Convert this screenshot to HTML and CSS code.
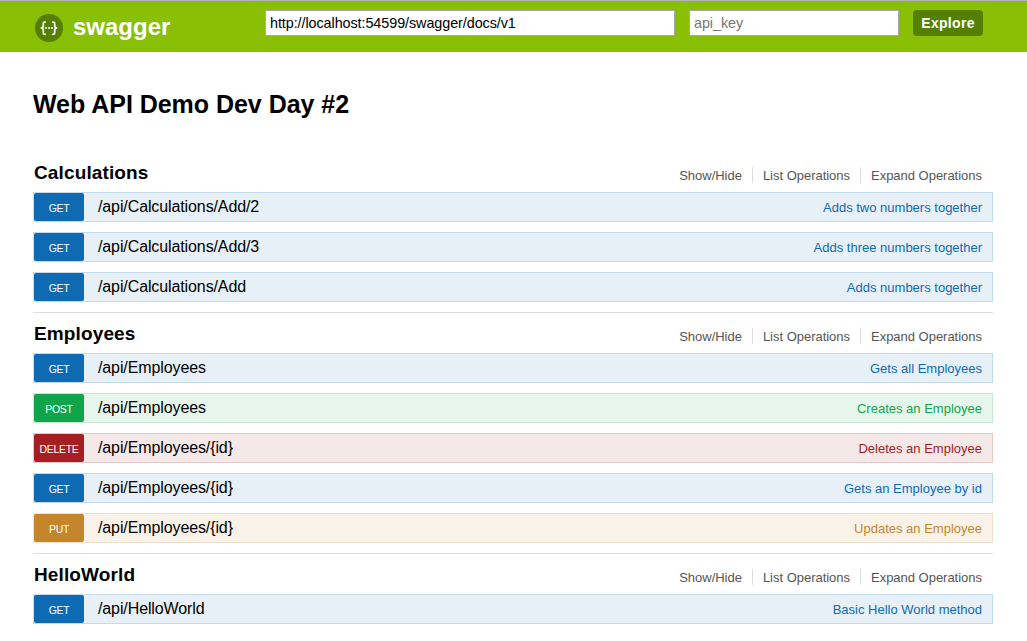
FILE: index.html
```html
<!DOCTYPE html>
<html lang="en">
<head>
<meta charset="utf-8">
<title>Swagger UI</title>
<link rel="stylesheet" href="styles.css">
</head>
<body>
<header class="header">
  <div class="brand">
    <svg class="logo" width="28" height="28" viewBox="0 0 28 28">
      <circle cx="14" cy="14" r="14" fill="#547f00"/>
      <g fill="none" stroke="#fff" stroke-width="1.7">
        <path d="M10.800 8.200H10Q8.300 8.200 8.300 9.800V12Q8.300 14 5.700 14Q8.300 14 8.300 16V18.800Q8.300 20.400 10 20.400H10.800"/>
        <path d="M17.200 8.200H18Q19.700 8.200 19.700 9.800V12Q19.700 14 22.300 14Q19.700 14 19.700 16V18.800Q19.700 20.400 18 20.400H17.200"/>
      </g>
      <g fill="#fff"><circle cx="11" cy="14" r="1"/><circle cx="14" cy="14" r="1"/><circle cx="17" cy="14" r="1"/></g>
    </svg>
    <span class="brand-name">swagger</span>
  </div>
  <form class="selector">
    <input class="field field-url" type="text" value="http://localhost:54599/swagger/docs/v1">
    <input class="field field-key" type="text" placeholder="api_key">
    <button class="explore" type="button">Explore</button>
  </form>
</header>
<main class="content">
  <h1 class="title">Web API Demo Dev Day #2</h1>

  <section class="resource">
    <div class="heading"><h2 class="name">Calculations</h2>
      <ul class="options"><li>Show/Hide</li><li>List Operations</li><li>Expand Operations</li></ul></div>
    <div class="op get"><span class="method">GET</span><span class="path">/api/Calculations/Add/2</span><span class="desc">Adds two numbers together</span></div>
    <div class="op get"><span class="method">GET</span><span class="path">/api/Calculations/Add/3</span><span class="desc">Adds three numbers together</span></div>
    <div class="op get"><span class="method">GET</span><span class="path">/api/Calculations/Add</span><span class="desc">Adds numbers together</span></div>
  </section>

  <section class="resource">
    <div class="heading"><h2 class="name">Employees</h2>
      <ul class="options"><li>Show/Hide</li><li>List Operations</li><li>Expand Operations</li></ul></div>
    <div class="op get"><span class="method">GET</span><span class="path">/api/Employees</span><span class="desc">Gets all Employees</span></div>
    <div class="op post"><span class="method">POST</span><span class="path">/api/Employees</span><span class="desc">Creates an Employee</span></div>
    <div class="op delete"><span class="method">DELETE</span><span class="path">/api/Employees/{id}</span><span class="desc">Deletes an Employee</span></div>
    <div class="op get"><span class="method">GET</span><span class="path">/api/Employees/{id}</span><span class="desc">Gets an Employee by id</span></div>
    <div class="op put"><span class="method">PUT</span><span class="path">/api/Employees/{id}</span><span class="desc">Updates an Employee</span></div>
  </section>

  <section class="resource">
    <div class="heading"><h2 class="name">HelloWorld</h2>
      <ul class="options"><li>Show/Hide</li><li>List Operations</li><li>Expand Operations</li></ul></div>
    <div class="op get"><span class="method">GET</span><span class="path">/api/HelloWorld</span><span class="desc">Basic Hello World method</span></div>
  </section>
</main>
</body>
</html>
```
FILE: styles.css
```css
* { box-sizing: border-box; }
body {
  margin: 0;
  height: 641px;
  overflow: hidden;
  background: #fff;
  color: #000;
  font-family: "Liberation Sans", Arial, sans-serif;
}
.header {
  display: flex;
  height: 52px;
  padding: 9px 44px 0 35px;
  border-top: 1px solid #b4b4b4;
  background: #89bf04;
}
.brand { display: flex; width: 230px; gap: 10px; }
.logo { margin-top: 4px; }
.brand-name {
  color: #fff;
  font-size: 24px;
  font-weight: bold;
  line-height: 34px;
}
.selector { display: flex; gap: 14px; margin: 0; }
.field {
  height: 26px;
  margin: 0;
  padding: 0 4px;
  border: 1px solid #aaa;
  background: #fff;
  color: #000;
  font-family: inherit;
  font-size: 14.4px;
  letter-spacing: -0.08px;
  outline: none;
}
.field::placeholder { color: #777; opacity: 1; }
.field-url { width: 410px; }
.field-key { width: 210px; }
.explore {
  width: 70px;
  height: 26px;
  padding: 0;
  border: 0;
  border-radius: 4px;
  background: #547f00;
  color: #fff;
  font-family: inherit;
  font-size: 14px;
  font-weight: bold;
  letter-spacing: 0.3px;
}
.content { width: 960px; margin-left: 33px; }
.title {
  margin: 0;
  padding-top: 36px;
  height: 100px;
  font-size: 25px;
  font-weight: bold;
  line-height: 32px;
  letter-spacing: -0.03px;
  white-space: nowrap;
}
.resource { border-bottom: 1px solid #ddd; }
.resource:last-child { border-bottom: 0; }
.heading {
  display: flex;
  justify-content: space-between;
  height: 40px;
  padding: 9px 11px 0 1px;
}
.name { margin: 0; font-size: 19px; line-height: 24px; letter-spacing: 0.13px; }
.options {
  display: flex;
  height: 16px;
  margin: 6px 0 0;
  padding: 0;
  list-style: none;
  color: #555;
  font-size: 13px;
  line-height: 17px;
  letter-spacing: -0.02px;
}
.options li { padding: 0 10px; border-right: 1px solid #ddd; white-space: nowrap; }
.options li:last-child { padding-right: 0; border-right: 0; }
.op {
  display: flex;
  height: 30px;
  margin-bottom: 10px;
  padding-right: 10px;
  border: 1px solid;
}
.method {
  width: 50px;
  height: 28px;
  border-radius: 2px;
  color: #fff;
  font-size: 10.5px;
  line-height: 30px;
  letter-spacing: -0.3px;
  text-align: center;
}
.path { flex: 1; padding-left: 14px; font-size: 16px; line-height: 27px; letter-spacing: -0.11px; }
.desc { font-size: 13px; line-height: 29px; }
.get { border-color: #c3d9ec; background: #e7f0f7; }
.get .method { background: #0f6ab4; }
.get .desc { color: #0f6ab4; }
.post { border-color: #c3e8d1; background: #e7f6ec; }
.post .method { background: #10a54a; }
.post .desc { color: #10a54a; }
.delete { border-color: #e8c6c7; background: #f5e8e8; }
.delete .method { background: #a41e22; }
.delete .desc { color: #a41e22; }
.put { border-color: #f0e0ca; background: #f9f2e9; }
.put .method { background: #c5862b; }
.put .desc { color: #c5862b; }
```
